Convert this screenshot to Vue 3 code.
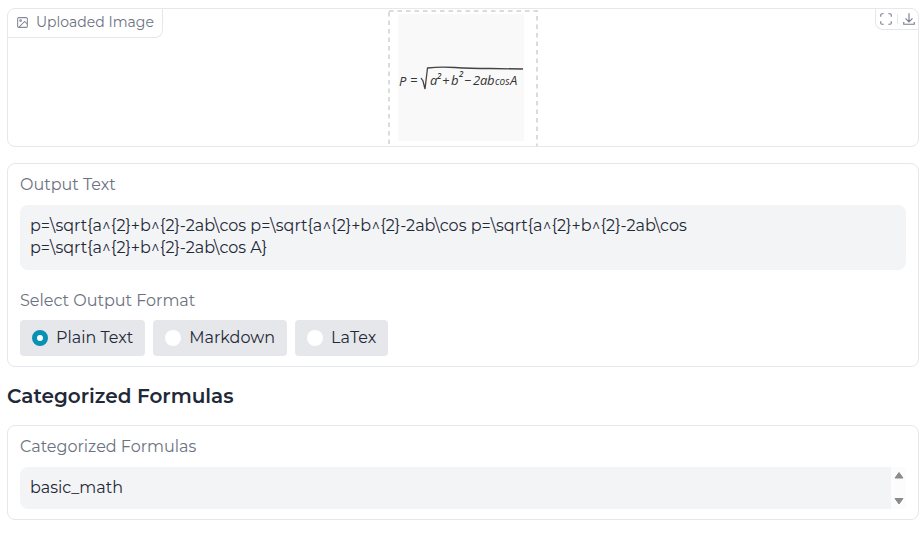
<script setup>
import { ref } from 'vue'

const formats = ['Plain Text', 'Markdown', 'LaTex']
const format = ref('Plain Text')
const output = ref(
  'p=\\sqrt{a^{2}+b^{2}-2ab\\cos p=\\sqrt{a^{2}+b^{2}-2ab\\cos p=\\sqrt{a^{2}+b^{2}-2ab\\cos\np=\\sqrt{a^{2}+b^{2}-2ab\\cos A}'
)
const category = ref('basic_math')
</script>

<template>
  <main class="page">
    <section class="card upload">
      <div class="tag">
        <svg class="tag-icon" viewBox="0 0 24 24" aria-hidden="true">
          <rect x="3" y="3" width="18" height="18" rx="2" />
          <circle cx="8.5" cy="8.5" r="1.5" />
          <path d="M21 15l-5-5L5 21" />
        </svg>
        <span>Uploaded Image</span>
      </div>
      <svg class="formula" viewBox="0 0 150 150" role="img" aria-label="Handwritten formula">
        <rect class="frame" x="1" y="1" width="148" height="148" />
        <rect x="10" y="4" width="126" height="127" fill="#f9f9f9" />
        <g class="ink">
          <text x="11" y="76">P</text>
          <text x="22" y="75">=</text>
          <text x="42" y="75">a</text>
          <text x="49" y="69" class="sup">2</text>
          <text x="54" y="75">+</text>
          <text x="63" y="75">b</text>
          <text x="71" y="67" class="sup">2</text>
          <text x="76" y="75">−</text>
          <text x="85" y="75">2</text>
          <text x="92" y="75">a</text>
          <text x="99" y="75">b</text>
          <text x="107" y="75" class="small">cos</text>
          <text x="122" y="75">A</text>
        </g>
        <path class="radical" d="M33 68L35 71L37 79L39.500 58Q52 56.500 67 57.500T102 58.500L135 59" />
      </svg>
      <div class="tools">
        <button type="button" aria-label="Fullscreen">
          <svg viewBox="0 0 24 24" aria-hidden="true">
            <path d="M8 3H5a2 2 0 0 0-2 2v3M16 3h3a2 2 0 0 1 2 2v3M8 21H5a2 2 0 0 1-2-2v-3M16 21h3a2 2 0 0 0 2-2v-3" />
          </svg>
        </button>
        <span class="divider"></span>
        <button type="button" aria-label="Download">
          <svg viewBox="0 0 24 24" aria-hidden="true">
            <path d="M12 2v14M6 11l6 6 6-6M3 17v4h18v-4" />
          </svg>
        </button>
      </div>
    </section>

    <section class="card panel">
      <label class="label" for="output">Output Text</label>
      <textarea id="output" v-model="output" class="field tall" rows="2" readonly></textarea>
      <fieldset class="formats">
        <legend class="label">Select Output Format</legend>
        <div class="options">
          <label v-for="f in formats" :key="f" class="option">
            <input v-model="format" type="radio" name="format" :value="f" />
            <span>{{ f }}</span>
          </label>
        </div>
      </fieldset>
    </section>

    <h2>Categorized Formulas</h2>

    <section class="card panel">
      <label class="label" for="category">Categorized Formulas</label>
      <div class="scroller">
        <textarea id="category" v-model="category" class="field" rows="1" readonly></textarea>
        <div class="track" aria-hidden="true">
          <svg viewBox="0 0 10 8"><path d="M5 1.500L9 7H1Z" /></svg>
          <svg viewBox="0 0 10 8"><path d="M5 7L9 1.500H1Z" /></svg>
        </div>
      </div>
    </section>
  </main>
</template>

<style>
body {
  background: #fff;
}
</style>

<style scoped>
.page {
  padding: 8px 4px 13px 7px;
  font-family: Montserrat, Inter, sans-serif;
  font-size: 16px;
  line-height: 22px;
  color: #1f2937;
}
.page * {
  box-sizing: border-box;
}
.card {
  position: relative;
  border: 1px solid #e5e7eb;
  border-radius: 8px;
  background: #fff;
}
.upload {
  height: 139px;
  overflow: hidden;
  display: flex;
  justify-content: center;
}
.tag {
  position: absolute;
  top: 0;
  left: 0;
  display: flex;
  align-items: center;
  gap: 7px;
  height: 29px;
  padding: 0 8px 2px;
  border: solid #e5e7eb;
  border-width: 0 1px 1px 0;
  border-radius: 0 0 8px 0;
  font-size: 14px;
  color: #6b7280;
}
.tag-icon {
  width: 13px;
  height: 13px;
  fill: none;
  stroke: #888c99;
  stroke-width: 2;
}
.formula {
  flex: none;
  display: block;
  width: 150px;
  height: 150px;
  margin-top: 1px;
}
.frame {
  fill: none;
  stroke: #cfcfd2;
  stroke-width: 1.5;
  stroke-dasharray: 4.5 4;
}
.ink {
  fill: #353535;
  font-family: "Open Sans", sans-serif;
  font-size: 13px;
  font-style: italic;
}
.sup {
  font-size: 8px;
  font-weight: 600;
}
.small {
  font-size: 10px;
}
.radical {
  fill: none;
  stroke: #444;
  stroke-width: 1.3;
}
.tools {
  position: absolute;
  top: 0;
  right: 0;
  display: flex;
  align-items: center;
  gap: 4px;
  height: 21px;
  padding: 0 2px 0 3px;
  border: solid #e5e7eb;
  border-width: 0 0 1px 1px;
  border-radius: 0 0 0 8px;
}
.tools button {
  display: flex;
  padding: 0;
  border: 0;
  background: none;
}
.tools svg {
  width: 14px;
  height: 14px;
  fill: none;
  stroke: #7c8090;
  stroke-width: 2;
}
.divider {
  width: 1px;
  height: 10px;
  background: #e5e7eb;
}
.panel {
  margin-top: 16px;
  padding: 10px 12px;
}
.label {
  display: block;
  margin-bottom: 9px;
  padding: 0;
  color: #6b7280;
}
.field {
  display: block;
  width: 100%;
  height: 42px;
  padding: 10px;
  border: 0;
  border-radius: 8px;
  outline: 0;
  resize: none;
  overflow: hidden;
  background: #f3f4f6;
  font: inherit;
  color: inherit;
}
.tall {
  height: 65px;
}
.formats {
  min-width: 0;
  margin: 20px 0 0;
  padding: 0;
  border: 0;
}
.formats .label {
  margin-bottom: 8px;
}
.options {
  display: flex;
  gap: 8px;
}
.option {
  display: flex;
  align-items: center;
  gap: 8px;
  height: 36px;
  padding: 0 12px;
  border-radius: 4px;
  background: #e5e7eb;
}
.option input {
  appearance: none;
  width: 16px;
  height: 16px;
  margin: 0;
  border-radius: 50%;
  background: #fff;
}
.option input:checked {
  border: 5px solid #0891b2;
}
h2 {
  margin: 17px 0 0;
  font-size: 20px;
  font-weight: 600;
  line-height: 24px;
}
h2 + .panel {
  margin-top: 17px;
}
.scroller {
  display: flex;
}
.scroller .field {
  flex: 1;
  width: auto;
  border-radius: 8px 0 0 8px;
}
.track {
  display: flex;
  flex-direction: column;
  justify-content: space-between;
  align-items: center;
  width: 15px;
  padding: 4px 0;
  background: #fcfcfc;
}
.track svg {
  width: 10px;
  height: 8px;
  fill: #8b8b8b;
  stroke: #8b8b8b;
  stroke-linejoin: round;
}
</style>
